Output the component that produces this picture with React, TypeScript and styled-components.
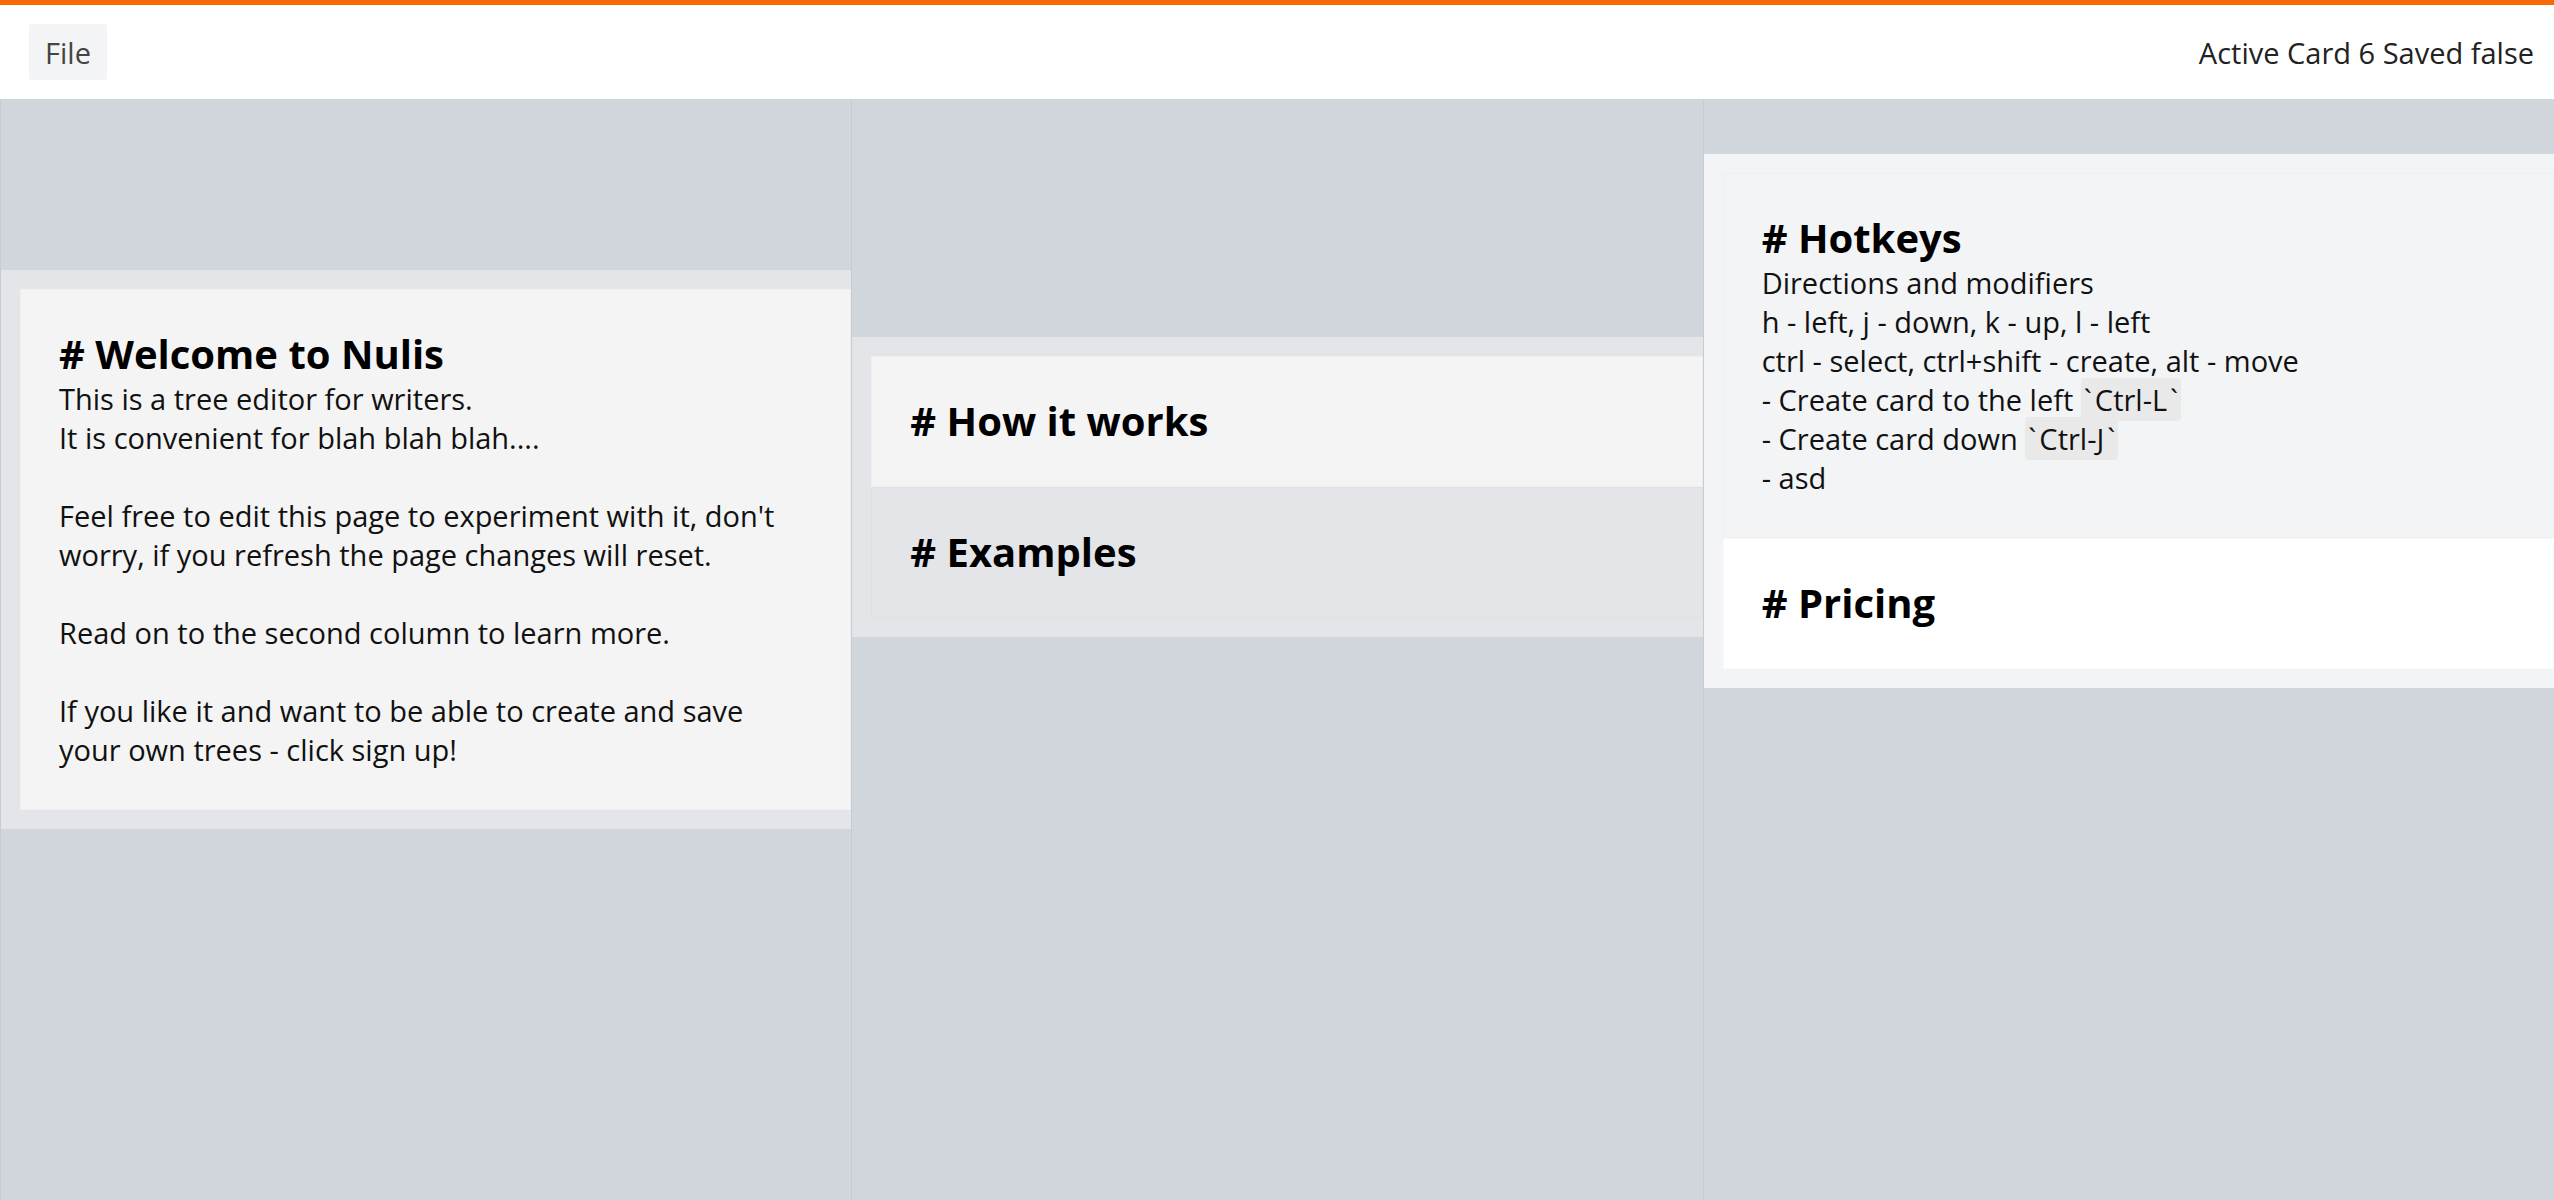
import React from "react";
import styled, { createGlobalStyle } from "styled-components";

const GlobalStyle = createGlobalStyle`
  html, body { margin: 0; padding: 0; }
  body {
    font-family: "Open Sans", "Noto Sans", sans-serif;
    background: #d1d5dc;
  }
  * { box-sizing: border-box; }
`;

const Page = styled.div`
  display: flex;
  flex-direction: column;
  height: 100vh;
  overflow: hidden;
`;

const TopBar = styled.header`
  flex: none;
  height: 99px;
  border-top: 5px solid #f76707;
  background: #ffffff;
  display: flex;
  align-items: center;
  justify-content: space-between;
  padding: 0 20px 0 29px;
`;

const FileButton = styled.button`
  width: 78px;
  height: 56px;
  border: none;
  border-radius: 2px;
  background: #f3f4f6;
  color: #444444;
  font-family: "Open Sans", sans-serif;
  font-size: 29px;
  padding: 0;
  cursor: pointer;
`;

const Status = styled.div`
  font-size: 29px;
  color: #222222;
  line-height: 39px;
`;

const Board = styled.main`
  flex: 1;
  display: grid;
  grid-template-columns: repeat(3, 1fr);
  background: #d1d5dc;
  min-height: 0;
`;

const Column = styled.section<{ $offset: number }>`
  border-left: 1px solid #c6cad2;
  padding-top: ${(p) => p.$offset}px;
  min-width: 0;
`;

const Group = styled.div<{ $bg: string }>`
  background: ${(p) => p.$bg};
  padding: 19px 0 19px 19px;
`;

const Card = styled.div<{ $bg: string }>`
  background: ${(p) => p.$bg};
  box-shadow: inset 0 0 0 1px rgba(0, 0, 0, 0.02);
  padding: 41px 39px 41px;
  color: #111111;
`;

const Heading = styled.h1`
  margin: 0 0 2px;
  font-size: 40px;
  line-height: 47px;
  font-weight: 700;
  color: #000000;
`;

const Line = styled.div`
  font-size: 29px;
  line-height: 39px;
  min-height: 39px;
  white-space: pre-wrap;
`;

const Code = styled.span`
  background: #e9e9e9;
  border-radius: 4px;
  padding: 2px 0;
`;

const CodePart = styled.span`
  padding: 0 3px;
`;

const welcomeLines = [
  "This is a tree editor for writers.",
  "It is convenient for blah blah blah....",
  "",
  "Feel free to edit this page to experiment with it, don't",
  "worry, if you refresh the page changes will reset.",
  "",
  "Read on to the second column to learn more.",
  "",
  "If you like it and want to be able to create and save",
  "your own trees - click sign up!",
];

const InlineCode = ({ children }: { children: string }) => (
  <Code>
    <CodePart>`</CodePart>
    {children}
    <CodePart>`</CodePart>
  </Code>
);

export default function App() {
  return (
    <>
      <GlobalStyle />
      <Page>
        <TopBar>
          <FileButton>File</FileButton>
          <Status>Active Card 6 Saved false</Status>
        </TopBar>
        <Board>
          <Column $offset={171}>
            <Group $bg="#e4e5e9">
              <Card $bg="#f4f4f4">
                <Heading># Welcome to Nulis</Heading>
                {welcomeLines.map((l, i) => (
                  <Line key={i}>{l}</Line>
                ))}
              </Card>
            </Group>
          </Column>
          <Column $offset={238}>
            <Group $bg="#e4e5e9">
              <Card $bg="#f4f4f4">
                <Heading># How it works</Heading>
              </Card>
              <Card $bg="#e4e5e9">
                <Heading># Examples</Heading>
              </Card>
            </Group>
          </Column>
          <Column $offset={55}>
            <Group $bg="#f3f4f6">
              <Card $bg="#f3f4f6">
                <Heading># Hotkeys</Heading>
                <Line>Directions and modifiers</Line>
                <Line>h - left, j - down, k - up, l - left</Line>
                <Line>ctrl - select, ctrl+shift - create, alt - move</Line>
                <Line>
                  - Create card to the left <InlineCode>Ctrl-L</InlineCode>
                </Line>
                <Line>
                  - Create card down <InlineCode>Ctrl-J</InlineCode>
                </Line>
                <Line>- asd</Line>
              </Card>
              <Card $bg="#ffffff">
                <Heading># Pricing</Heading>
              </Card>
            </Group>
          </Column>
        </Board>
      </Page>
    </>
  );
}
